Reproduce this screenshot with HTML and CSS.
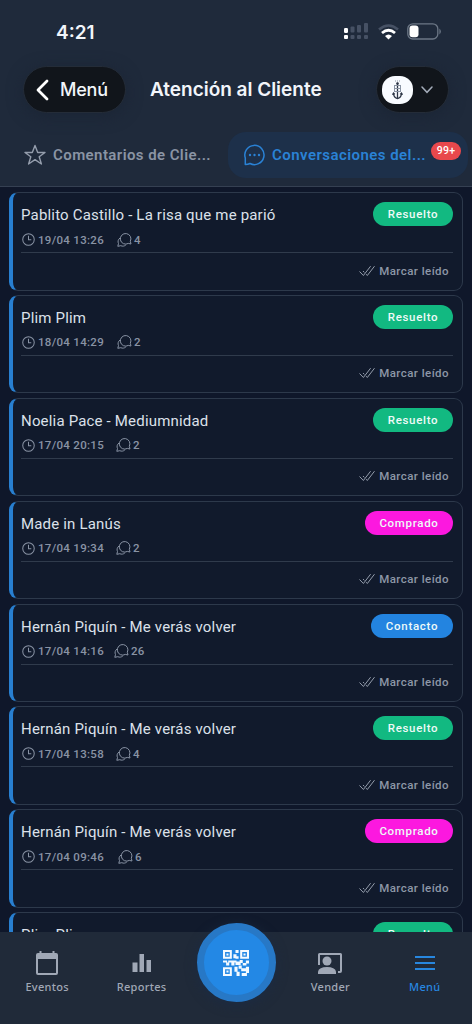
FILE: index.html
```html
<!DOCTYPE html>
<html lang="es">
<head>
<meta charset="utf-8">
<title>Atención al Cliente</title>
<link rel="stylesheet" href="styles.css">
</head>
<body>
<svg class="defs" width="0" height="0" aria-hidden="true">
  <symbol id="clock" viewBox="0 0 14 14"><circle cx="7" cy="7" r="6.200"/><path d="M7 3V7.300h3"/></symbol>
  <symbol id="chats" viewBox="0 0 15 14"><path d="M14 11 13.300 8.300A5.300 5.300 0 1 0 11.300 10.400Z"/><path d="M3 5C1 6.500.6 8.800 1.500 10.500L.8 13.300l3-.6C5.500 13.500 7.500 13.200 8.800 12"/></symbol>
  <symbol id="checks" viewBox="0 0 16 12"><path d="M.5 6.500 4.400 10.500 11.600 1.200M7.200 9.200 8.300 10.500 15.500 1.200M4 6 5.300 7.400"/></symbol>
</svg>
<div class="phone">
  <header class="header">
    <div class="status">
      <span class="time">4:21</span>
      <div class="system">
        <svg width="26" height="18" viewBox="0 0 26 18"><g fill="#fff"><rect x="1" y="5" width="4" height="5" rx="1.200"/><rect x="1" y="12" width="4" height="4" rx="1"/></g><g fill="#465164"><rect x="7.500" y="3.500" width="4" height="6" rx="1"/><rect x="14" y="2" width="4" height="7.500" rx="1"/><rect x="21" y="0" width="4" height="9.500" rx="1"/><rect x="7.500" y="12" width="4" height="4" rx="1"/><rect x="14" y="12" width="4" height="4" rx="1"/><rect x="21" y="12" width="4" height="4" rx="1"/></g></svg>
        <svg class="wifi" width="21" height="16" viewBox="0 0 21 16"><path d="M1 5.500Q10.500-2.500 20 5.500" fill="none" stroke="#465164" stroke-width="2.600"/><path d="M4 9Q10.500 3.400 17 9" fill="none" stroke="#fff" stroke-width="2.800"/><path d="M7 12Q10.500 9 14 12L10.500 15.500Z" fill="#fff"/></svg>
        <svg class="battery" width="35" height="17" viewBox="0 0 35 17"><rect x=".8" y=".8" width="30" height="15.200" rx="5" fill="none" stroke="#6c7786" stroke-width="1.300"/><rect x="2.500" y="2.600" width="9" height="11.600" rx="3" fill="#fff"/><path d="M32.500 5.500Q35 8.500 32.500 11.500Z" fill="#7c8796"/></svg>
      </div>
    </div>
    <div class="titlebar">
      <button class="back"><svg width="13" height="22" viewBox="0 0 13 22"><path d="M11 2 2 11l9 9" fill="none" stroke="#fff" stroke-width="2.800" stroke-linecap="round" stroke-linejoin="round"/></svg><span>Menú</span></button>
      <h1>Atención al Cliente</h1>
      <button class="account">
        <svg width="31" height="28" viewBox="0 0 31 28"><rect width="31" height="28" rx="13" fill="#f8fbff"/><g fill="none" stroke="#2c3545"><path d="M15.500 7v16M11.500 17.500q.5 4.500 4 5 3.500-.5 4-5M10.500 18.800l1-1.800 1.300 1.400M20.500 18.800l-1-1.800-1.300 1.400" stroke-width="1.300"/><path d="M12 9.500h7M12 12.500h7M12 15.500h7M12.500 9v7M18.500 9v7" stroke="#8993a3" stroke-width="1"/><circle cx="15.500" cy="7.500" r="1"/><path d="M13 5h5" stroke-dasharray="1 1" stroke="#8993a3"/></g></svg>
        <svg width="12" height="8" viewBox="0 0 12 8"><path d="m1 1 5 5.300L11 1" fill="none" stroke="#a4acba" stroke-width="1.500" stroke-linecap="round"/></svg>
      </button>
    </div>
    <nav class="tabs">
      <a class="tab"><svg width="24" height="22" viewBox="0 0 24 22"><path d="m12 1.500 2.700 7H22l-5.800 4.300 2.200 7.200L12 15.700 5.600 20l2.200-7.200L2 8.500h7.300Z" fill="none" stroke="#949dac" stroke-width="1.400" stroke-linejoin="round"/></svg><span class="comments">Comentarios de Clie...</span></a>
      <a class="tab active"><svg width="23" height="22" viewBox="0 0 23 22"><path d="M2.300 20.500V14A9.600 9.600 0 1 1 7 19.500Q5 20.500 2.300 20.500Z" fill="none" stroke="#2a82d5" stroke-width="1.500" stroke-linejoin="round"/><g fill="#2a82d5"><circle cx="7" cy="11" r="1.200"/><circle cx="11.500" cy="11" r="1.200"/><circle cx="16" cy="11" r="1.200"/></g></svg><span class="talks">Conversaciones del...</span><b class="count">99+</b></a>
    </nav>
  </header>
  <main class="list">
    <article class="card"><div class="top"><h2>Pablito Castillo - La risa que me parió</h2><span class="badge green">Resuelto</span></div><div class="meta"><svg class="clock"><use href="#clock"/></svg><time>19/04 13:26</time><svg class="chats"><use href="#chats"/></svg><span>4</span></div><div class="action"><svg class="checks"><use href="#checks"/></svg><span>Marcar leído</span></div></article>
    <article class="card"><div class="top"><h2>Plim Plim</h2><span class="badge green">Resuelto</span></div><div class="meta"><svg class="clock"><use href="#clock"/></svg><time>18/04 14:29</time><svg class="chats"><use href="#chats"/></svg><span>2</span></div><div class="action"><svg class="checks"><use href="#checks"/></svg><span>Marcar leído</span></div></article>
    <article class="card"><div class="top"><h2>Noelia Pace - Mediumnidad</h2><span class="badge green">Resuelto</span></div><div class="meta"><svg class="clock"><use href="#clock"/></svg><time class="short">17/04 20:15</time><svg class="chats"><use href="#chats"/></svg><span>2</span></div><div class="action"><svg class="checks"><use href="#checks"/></svg><span>Marcar leído</span></div></article>
    <article class="card"><div class="top"><h2>Made in Lanús</h2><span class="badge pink">Comprado</span></div><div class="meta"><svg class="clock"><use href="#clock"/></svg><time class="short">17/04 19:34</time><svg class="chats"><use href="#chats"/></svg><span>2</span></div><div class="action"><svg class="checks"><use href="#checks"/></svg><span>Marcar leído</span></div></article>
    <article class="card"><div class="top"><h2>Hernán Piquín - Me verás volver</h2><span class="badge blue">Contacto</span></div><div class="meta"><svg class="clock"><use href="#clock"/></svg><time class="narrow">17/04 14:16</time><svg class="chats"><use href="#chats"/></svg><span>26</span></div><div class="action"><svg class="checks"><use href="#checks"/></svg><span>Marcar leído</span></div></article>
    <article class="card"><div class="top"><h2>Hernán Piquín - Me verás volver</h2><span class="badge green">Resuelto</span></div><div class="meta"><svg class="clock"><use href="#clock"/></svg><time class="short">17/04 13:58</time><svg class="chats"><use href="#chats"/></svg><span>4</span></div><div class="action"><svg class="checks"><use href="#checks"/></svg><span>Marcar leído</span></div></article>
    <article class="card"><div class="top"><h2>Hernán Piquín - Me verás volver</h2><span class="badge pink">Comprado</span></div><div class="meta"><svg class="clock"><use href="#clock"/></svg><time class="wide">17/04 09:46</time><svg class="chats"><use href="#chats"/></svg><span>6</span></div><div class="action"><svg class="checks"><use href="#checks"/></svg><span>Marcar leído</span></div></article>
    <article class="card"><div class="top"><h2>Plim Plim</h2><span class="badge green">Resuelto</span></div></article>
  </main>
  <nav class="bottom">
    <a class="item"><svg width="24" height="26" viewBox="0 0 24 26"><path d="M5.500 1v4M18.500 1v4" stroke="#a0a8b6" stroke-width="2"/><path fill="#a0a8b6" fill-rule="evenodd" d="M3 3h18q2 0 2 2v18q0 2-2 2H3q-2 0-2-2V5q0-2 2-2Zm0 6v14h18V9Z"/></svg><span>Eventos</span></a>
    <a class="item"><svg width="24" height="26" viewBox="0 0 24 26"><path fill="#a0a8b6" d="M2.500 12.500h5v9.500h-5zM9.500 4H14v18H9.500zM16.500 10H21v12h-4.500z"/></svg><span>Reportes</span></a>
    <div class="scan"><svg width="26" height="26" viewBox="0 0 25 25" fill="#f4faff"><path fill-rule="evenodd" d="M0 0h8.500v8.500H0zm2 2v4.500h4.500V2zM16.500 0H25v8.500h-8.500zm2 2v4.500H23V2zM0 16.500h8.500V25H0zm2 2V23h4.500v-4.500z"/><path d="M3.300 3.300h2v2h-2zM19.700 3.300h2v2h-2zM3.300 19.700h2v2h-2zM12 0h3v3h-3zM10 4h3v4h-3zM12 6h3v2.500h-3zM0 10h4v2H0zM3 12h3v3H3zM5 10h8v2H5zM8 12h3v3H8zM12 11h5v3.500h-5zM16 9.500h3v3h-3zM22 10h3v3h-3zM19 12.500h3.500v2.500H19zM11 16h3v5h-3zM15 15h3v3h-3zM17.500 17.500H22v3h-4.500zM22 16h3v6h-3zM13 21h3v4h-3zM18 22h5v3h-5z"/></svg></div>
    <a class="item"><svg width="26" height="26" viewBox="0 0 26 26"><path d="M2 15V4.500q0-.5.500-.5h21q.5 0 .5.500V21q0 1-1 1h-2" fill="none" stroke="#a0a8b6" stroke-width="2"/><circle cx="10" cy="11" r="4.500" fill="#a0a8b6"/><path fill="#a0a8b6" d="M1 24v-2.500Q2 17 10 17t9 4.500V24Z"/></svg><span>Vender</span></a>
    <a class="item current"><svg width="24" height="26" viewBox="0 0 24 26"><path d="M2 7h20M2 13h20M2 19h20" stroke="#2787e0" stroke-width="2.200"/></svg><span>Menú</span></a>
  </nav>
</div>
</body>
</html>
```
FILE: styles.css
```css
* { box-sizing: border-box; }
body { margin: 0; background: #0f172a; font-family: Roboto, "Liberation Sans", sans-serif; color: #f2f5fa; }
.defs { position: absolute; }
svg { display: block; flex: none; }
.phone { width: 472px; height: 1024px; overflow: hidden; display: flex; flex-direction: column; }
.header { flex: none; height: 187px; background: #1f2a3b; border-bottom: 1px solid #354052; }
.status { height: 65px; padding: 22px 30px 0 56px; display: flex; justify-content: space-between; align-items: flex-start; }
.time { font: 600 19px/22px Inter, sans-serif; letter-spacing: 0; }
.system { display: flex; align-items: flex-start; padding-top: 1px; }
.wifi { margin: 1px 8px 0 9px; }
.titlebar { height: 47px; margin-top: 1px; padding: 0 23px; display: flex; align-items: center; }
button { font: inherit; color: inherit; border: 1px solid #242c38; background: #11151b; padding: 0; display: flex; align-items: center; height: 47px; border-radius: 24px; box-shadow: 0 3px 16px #1b2535; }
.back { width: 103px; padding-left: 12px; gap: 11px; font: 500 18px/24px Inter, sans-serif; letter-spacing: -.2px; }
h1 { margin: 0 0 0 24px; font: 600 19px/24px Inter, sans-serif; white-space: nowrap; letter-spacing: -.02px; width: 174px; }
.account { margin-left: auto; width: 73px; padding-left: 5px; gap: 8px; }
.tabs { display: flex; padding-left: 6px; margin-top: 19px; height: 46px; }
.tab { display: flex; align-items: center; width: 222px; height: 46px; padding-left: 17px; gap: 6px; font-size: 15px; font-weight: 600; color: #8a94a4; white-space: nowrap; }
.tab.active { width: 240px; background: #1d304a; border-radius: 18px; padding-left: 15px; color: #2a82d5; }
.comments { letter-spacing: .42px; }
.talks { letter-spacing: .45px; width: 153px; }
.count { align-self: flex-start; margin-top: 10px; width: 30px; height: 18px; border-radius: 9px; background: #e8484c; color: #fff; text-align: center; font-size: 10.500px; font-weight: 500; letter-spacing: .3px; line-height: 18px; }
.list { flex: 1; min-height: 0; overflow: hidden; padding: 5px 9px 0; }
.card { height: 98.500px; margin-bottom: 4.400px; padding: 9px 9px 0 8px; border: 1px solid #2d394b; border-left: 4px solid #287fd0; border-radius: 9px; background: #111a2c; }
.top { height: 25px; display: flex; justify-content: space-between; }
h2 { margin: 2px 0 0; font-size: 15px; line-height: 22px; font-weight: 400; letter-spacing: .18px; color: #dce1ea; white-space: nowrap; }
.badge { height: 24px; border-radius: 12px; font-size: 11.500px; line-height: 24px; font-weight: 500; letter-spacing: .7px; color: #eefaf8; width: 80px; text-align: center; white-space: nowrap; }
.green { background: #12b981; }
.pink { background: #fc18df; width: 88px; }
.blue { background: #2384e0; width: 82px; }
.meta { height: 26px; padding-left: 1px; border-bottom: 1px solid #303b4c; display: flex; align-items: center; font-size: 11.500px; font-weight: 500; letter-spacing: .3px; color: #8993a4; }
.clock { width: 13px; height: 13px; fill: none; stroke: #8993a4; stroke-width: 1.100; }
.meta time { margin-left: 3px; width: 66px; white-space: nowrap; }
.meta .short { width: 65px; }
.meta .narrow { width: 63px; }
.meta .wide { width: 67px; }
.chats { width: 15px; height: 14px; margin: 0 2px 0 13px; fill: none; stroke: #8993a4; }
.action { display: flex; align-items: center; justify-content: flex-end; height: 35px; padding-right: 4px; gap: 4px; font-size: 11.500px; font-weight: 500; letter-spacing: .45px; color: #8d97a7; }
.checks { width: 16px; height: 12px; fill: none; stroke: #949dac; }
.bottom { flex: none; height: 92px; background: #202a39; display: grid; grid-template-columns: repeat(5, 94.400px); }
.item { display: flex; flex-direction: column; align-items: center; padding-top: 18px; gap: 3px; font: 500 11px/15px "Noto Sans", sans-serif; letter-spacing: .3px; color: #a0a8b6; }
.current { color: #2787e0; }
.scan { width: 79px; height: 79px; margin: -9px 0 0 8px; border-radius: 50%; border: 7px solid #2778c6; background: #2388e5; display: flex; align-items: center; justify-content: center; box-shadow: 0 3px 12px #1b2b43; }
```
